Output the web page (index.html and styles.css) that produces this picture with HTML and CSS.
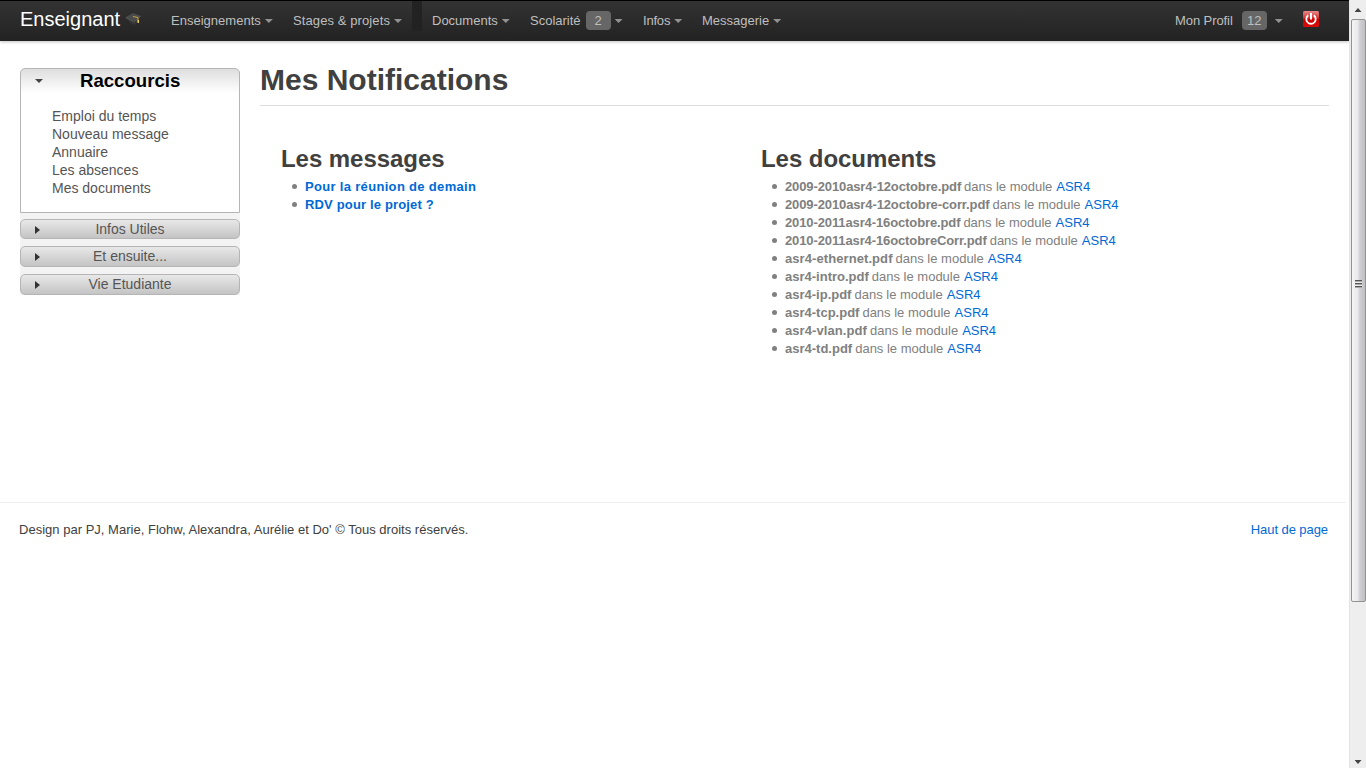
FILE: index.html
```html
<!DOCTYPE html>
<html lang="fr">
<head>
<meta charset="utf-8">
<title>Mes Notifications</title>
<link rel="stylesheet" href="styles.css">
</head>
<body>
<div class="page">
  <header class="topbar">
    <a class="brand"><span class="brand-name">Enseignant</span>
      <svg class="cap" width="17" height="13" viewBox="0 0 17 13"><path d="M4 6v4l5 3 4-3V6z" fill="#373737"/><path d="M0 5.500 8 1l8 3-7 5z" fill="#4b4b4b"/><path d="M1 6l8 3.500L15.500 4.500" fill="none" stroke="#666" stroke-width=".7"/><path d="M8 4.500l5 1v4" fill="none" stroke="#c5a437" stroke-width="1"/><path d="M12.500 8h1.500v3h-1.500z" fill="#eccb48"/></svg>
    </a>
    <nav class="menu">
      <a class="ens"><span>Enseignements</span><i class="caret"></i></a>
      <a class="stages"><span>Stages &amp; projets</span><i class="caret"></i></a>
      <b class="divider"></b>
      <a class="docs"><span>Documents</span><i class="caret"></i></a>
      <a class="scol"><span>Scolarité</span><em class="badge">2</em><i class="caret"></i></a>
      <a class="infos"><span>Infos</span><i class="caret"></i></a>
      <a class="mess"><span>Messagerie</span><i class="caret"></i></a>
    </nav>
    <nav class="account">
      <a class="profil"><span>Mon Profil</span><em class="badge">12</em><i class="caret"></i></a>
      <svg class="power" width="16" height="16" viewBox="0 0 16 16"><defs><linearGradient id="red" x2="0" y2="1"><stop offset="0" stop-color="#e58a8a"/><stop offset=".45" stop-color="#d43131"/><stop offset=".5" stop-color="#c00"/><stop offset="1" stop-color="#d80a0a"/></linearGradient></defs><rect width="16" height="16" rx="1.500" fill="url(#red)"/><path d="M5.200 4.300a4.700 4.700 0 1 0 5.600 0" fill="none" stroke="#fff" stroke-width="1.800"/><path d="M8 2v6.500" stroke="#fff" stroke-width="2"/></svg>
    </nav>
  </header>
  <div class="columns">
    <aside class="sidebar">
      <section class="panel">
        <h3><i class="arrow-down"></i>Raccourcis</h3>
        <ul>
          <li>Emploi du temps</li>
          <li>Nouveau message</li>
          <li>Annuaire</li>
          <li>Les absences</li>
          <li>Mes documents</li>
        </ul>
      </section>
      <div class="folds">
        <div class="fold"><i class="arrow-right"></i>Infos Utiles</div>
        <div class="fold tall"><i class="arrow-right"></i>Et ensuite...</div>
        <div class="fold tall"><i class="arrow-right"></i>Vie Etudiante</div>
      </div>
    </aside>
    <main class="content">
      <h1>Mes Notifications</h1>
      <div class="lists">
        <section>
          <h2>Les messages</h2>
          <ul class="messages">
            <li><a><strong>Pour la réunion de demain</strong></a></li>
            <li><a class="snug"><strong>RDV pour le projet ?</strong></a></li>
          </ul>
        </section>
        <section>
          <h2>Les documents</h2>
          <ul class="files">
            <li><strong class="long">2009-2010asr4-12octobre.pdf</strong><span>dans le module</span><a>ASR4</a></li>
            <li><strong class="long">2009-2010asr4-12octobre-corr.pdf</strong><span>dans le module</span><a>ASR4</a></li>
            <li><strong class="long">2010-2011asr4-16octobre.pdf</strong><span>dans le module</span><a>ASR4</a></li>
            <li><strong class="long">2010-2011asr4-16octobreCorr.pdf</strong><span>dans le module</span><a>ASR4</a></li>
            <li><strong class="wide">asr4-ethernet.pdf</strong><span>dans le module</span><a>ASR4</a></li>
            <li><strong>asr4-intro.pdf</strong><span>dans le module</span><a>ASR4</a></li>
            <li><strong>asr4-ip.pdf</strong><span>dans le module</span><a>ASR4</a></li>
            <li><strong>asr4-tcp.pdf</strong><span>dans le module</span><a>ASR4</a></li>
            <li><strong class="wide">asr4-vlan.pdf</strong><span>dans le module</span><a>ASR4</a></li>
            <li><strong>asr4-td.pdf</strong><span>dans le module</span><a>ASR4</a></li>
          </ul>
        </section>
      </div>
    </main>
  </div>
  <footer class="footer">
    <span class="credits">Design par PJ, Marie, Flohw, Alexandra, Aurélie et Do' © Tous droits réservés.</span>
    <a class="top-link">Haut de page</a>
  </footer>
</div>
<div class="scrollbar">
  <i class="scroll-up"></i>
  <div class="thumb"><i class="grip"></i></div>
  <i class="scroll-down"></i>
</div>
</body>
</html>
```
FILE: styles.css
```css
* { box-sizing: border-box; }
body {
  margin: 0;
  display: flex;
  height: 768px;
  overflow: hidden;
  background: #fff;
  color: #404040;
  font: 13px/18px "Liberation Sans", Arial, sans-serif;
}
.page { width: 1349px; height: 768px; }
h1, h2, h3, ul { margin: 0; padding: 0; }
ul { list-style: none; }
a { color: #0069d6; text-decoration: none; }

/* Top bar */
.topbar {
  display: flex;
  height: 41px;
  border-top: 1px solid #000;
  background: linear-gradient(#333, #222);
  box-shadow: 0 1px 3px rgba(0, 0, 0, .25);
}
.brand { display: flex; width: 161px; padding-left: 20px; color: #fff; font-size: 20px; line-height: 36px; }
.brand-name { width: 105px; }
.cap { margin-top: 11px; }
.menu, .account { display: flex; }
.menu { width: 1004px; }
.menu a, .account a { display: flex; padding: 10px 10px 0; color: #bfbfbf; white-space: nowrap; }
.menu span, .account span, .badge { line-height: 20px; }
.menu .ens { width: 122px; letter-spacing: .02px; }
.menu .stages { width: 129px; letter-spacing: .1px; }
.divider { width: 10px; height: 30px; background: #222; }
.menu .docs { width: 98px; }
.menu .scol { width: 113px; }
.menu .infos { width: 59px; letter-spacing: -.2px; }
.caret {
  flex: none;
  width: 8px;
  height: 4px;
  margin: 8px 0 0 4px;
  background: #929292;
  clip-path: polygon(0 0, 100% 0, 50% 100%);
}
.badge {
  flex: none;
  height: 19px;
  width: 25px;
  margin: 0 0 0 5px;
  border-radius: 4px;
  background: #666;
  color: #bfbfbf;
  font-style: normal;
  text-align: center;
}
.account .profil { width: 138px; letter-spacing: -.08px; }
.profil .badge { margin-left: 9px; }
.profil .caret { margin-left: 8px; }
.power { margin: 10px 0 0; }

/* Columns */
.columns { display: flex; height: 461px; padding-left: 20px; }
.sidebar { width: 220px; padding-top: 27px; font-size: 14px; }
.panel {
  height: 145px;
  border: 1px solid #b5b5b5;
  border-radius: 5px 5px 0 0;
  background: linear-gradient(#dedede, #fff 24px);
}
.panel h3 { display: flex; height: 38px; padding: 3px 0 0 14px; color: #000; font-size: 18.6px; line-height: 18px; }
.panel ul { padding-left: 31px; color: #555; }
.arrow-down { width: 8px; height: 4px; margin: 7px 37px 0 0; background: #444; clip-path: polygon(0 0, 100% 0, 50% 100%); }
.folds { display: flex; flex-direction: column; gap: 7px; padding-top: 6px; background: #f3f3f3; }
.fold {
  display: grid;
  grid-template-columns: 14px 190px;
  height: 20px;
  border: 1px solid #b5b5b5;
  border-radius: 5px;
  background: linear-gradient(#e8e8e8, #c4c4c4);
  color: #555;
  text-align: center;
}
.fold.tall { height: 21px; }
.arrow-right { width: 5px; height: 8px; margin: 6px 0 0 14px; background: #333; clip-path: polygon(0 0, 100% 50%, 0 100%); }

.content { width: 1069px; margin-left: 20px; padding-top: 21px; }
.content h1 { height: 44px; border-bottom: 1px solid #ddd; font-size: 30px; line-height: 36px; }
.lists { display: grid; grid-template-columns: 480px 480px; padding: 35px 0 0 20px; }
.lists h2 { height: 37px; padding-left: 1px; font-size: 24px; line-height: 36px; letter-spacing: -.05px; }
.lists li { display: flex; height: 18px; padding-left: 12px; color: #808080; white-space: nowrap; }
.lists li::before { content: ""; width: 5px; height: 5px; margin: 6px 8px 0 0; border-radius: 50%; background: #808080; }
.messages a { letter-spacing: .32px; }
.messages .snug { letter-spacing: .16px; }
.files span { margin: 0 4px 0 3px; }
.files .long { letter-spacing: -.115px; }
.files .wide { letter-spacing: .08px; }

/* Footer */
.footer { display: flex; justify-content: space-between; width: 1346px; padding: 18px 18px 0 19px; border-top: 1px solid #eee; }
.credits { letter-spacing: .015px; }
.top-link { letter-spacing: -.07px; }

/* Scroll bar */
.scrollbar { display: flex; flex-direction: column; width: 17px; height: 768px; border-left: 1px solid #e3e3e3; background: #eee; align-items: center; }
.scroll-up { width: 7px; height: 4px; margin: 8px 0 7px; background: #444; clip-path: polygon(50% 0, 100% 100%, 0 100%); }
.thumb { width: 15px; height: 583px; padding: 260px 0 0 3px; border: 1px solid #929292; border-radius: 2px; background: linear-gradient(90deg, #f5f5f5, #e9e9eb 45%, #d0d0d4 60%, #c0c0c4); }
.grip { display: block; width: 7px; height: 8px; background: repeating-linear-gradient(#555 0 1px, #aaa 1px 2px, #eee 2px 3px); }
.scroll-down { width: 7px; height: 4px; margin-top: 158px; background: #444; clip-path: polygon(0 0, 100% 0, 50% 100%); }
```
